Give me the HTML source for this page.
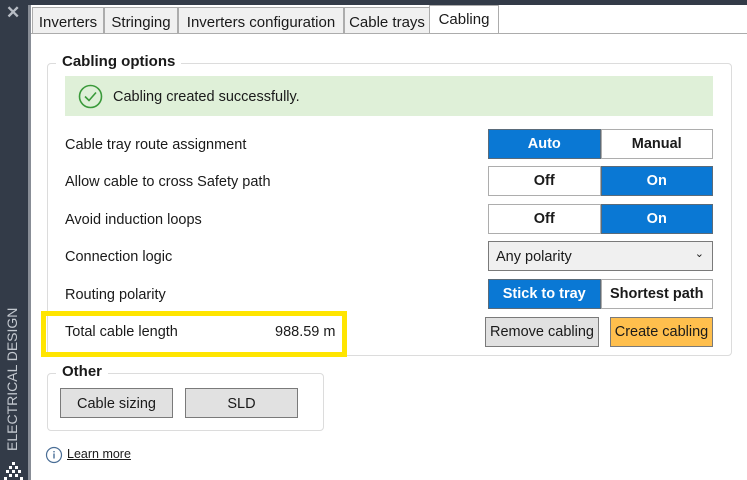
<!DOCTYPE html>
<html><head><style>
*{box-sizing:border-box;margin:0;padding:0}
body{width:747px;height:480px;position:relative;background:#fff;font-family:"Liberation Sans",sans-serif;font-size:14.5px;color:#1a1a1a;overflow:hidden}
.a{position:absolute}
.side{left:0;top:0;width:28px;height:480px;background:#333b48}
.topband{left:28px;top:0;width:719px;height:5px;background:#333b48}
.frame{left:28px;top:5px;width:3px;height:475px;background:#888d96}
.tab{top:7px;height:27px;border:1px solid #acacac;background:#f0f0f0;padding:5px 0 0 0;text-align:center;font-size:15px}
.tabline{left:31px;top:33px;width:716px;height:1px;background:#acacac}
.tsel{background:#fff;border-bottom:none;height:28px;top:5px}
.grp{border:1px solid #dcdcdc;border-radius:4px}
.lbl{left:65px;font-size:14.5px}
.tg{left:488px;width:225px;height:30px;display:flex}
.tg div{flex:1;border:1px solid #adadad;background:#fff;text-align:center;line-height:28px;font-weight:bold;font-size:14.5px}
.tg .on{background:#0a78d4;color:#fff;border-color:#5a6b7a}
.btn{border:1px solid #7a7a7a;background:#e1e1e1;text-align:center;line-height:28px;font-size:14.5px}
</style></head><body>
<div class="a side"></div>
<div class="a" style="left:6px;top:3px;color:#b8bdc5;font-size:17px;font-weight:bold">✕</div>
<div class="a" style="left:4px;top:451px;transform:rotate(-90deg);transform-origin:0 0;color:#c4c9d0;font-size:14px;white-space:nowrap;width:140px">ELECTRICAL DESIGN</div>
<svg class="a" style="left:4px;top:462px" width="20" height="18"><g fill="#fff"><rect x="8" y="0" width="3" height="3"/><rect x="5" y="4" width="3" height="3"/><rect x="11" y="4" width="3" height="3"/><rect x="2" y="8" width="3" height="3"/><rect x="8" y="8" width="3" height="3"/><rect x="14" y="8" width="3" height="3"/><rect x="5" y="12" width="3" height="3"/><rect x="11" y="12" width="3" height="3"/><rect x="0" y="15" width="3" height="3"/><rect x="16" y="15" width="3" height="3"/></g></svg>
<div class="a topband"></div>
<div class="a frame"></div>
<div class="a tabline"></div>
<div class="a tab" style="left:32px;width:72px;padding-top:6px">Inverters</div>
<div class="a tab" style="left:104px;width:74px;padding-top:6px">Stringing</div>
<div class="a tab" style="left:178px;width:166px;padding-top:6px">Inverters configuration</div>
<div class="a tab" style="left:344px;width:86px;padding-top:6px">Cable trays</div>
<div class="a tab tsel" style="left:429px;width:70px">Cabling</div>

<div class="a grp" style="left:47px;top:63px;width:685px;height:293px"></div>
<div class="a" style="left:56px;top:53px;background:#fff;padding:0 6px;font-weight:bold;font-size:15px">Cabling options</div>
<div class="a" style="left:65px;top:76px;width:648px;height:40px;background:#dff0d8"></div>
<svg class="a" style="left:78px;top:84px" width="25" height="25"><circle cx="12.5" cy="12.5" r="11" fill="none" stroke="#3a9a3a" stroke-width="1.6"/><path d="M7 12.5l4 4 7-8" fill="none" stroke="#3a9a3a" stroke-width="1.6"/></svg>
<div class="a" style="left:113px;top:89px">Cabling created successfully.</div>

<div class="a lbl" style="top:137px">Cable tray route assignment</div>
<div class="a tg" style="top:129px"><div class="on">Auto</div><div>Manual</div></div>
<div class="a lbl" style="top:174px">Allow cable to cross Safety path</div>
<div class="a tg" style="top:166px"><div>Off</div><div class="on">On</div></div>
<div class="a lbl" style="top:212px">Avoid induction loops</div>
<div class="a tg" style="top:204px"><div>Off</div><div class="on">On</div></div>
<div class="a lbl" style="top:249px">Connection logic</div>
<div class="a" style="left:488px;top:241px;width:225px;height:30px;border:1px solid #7a7a7a;background:#f0f0f0;padding:7px 0 0 7px">Any polarity<span style="position:absolute;right:8px;top:5px;font-size:11px">⌄</span></div>
<div class="a lbl" style="top:287px">Routing polarity</div>
<div class="a tg" style="top:279px"><div class="on">Stick to tray</div><div>Shortest path</div></div>
<div class="a" style="left:41px;top:311px;width:306px;height:46px;border:5px solid #ffe500"></div>
<div class="a lbl" style="top:324px">Total cable length</div>
<div class="a" style="left:275px;top:324px">988.59 m</div>
<div class="a btn" style="left:485px;top:317px;width:114px;height:30px">Remove cabling</div>
<div class="a btn" style="left:610px;top:317px;width:103px;height:30px;background:#ffbf4d">Create cabling</div>

<div class="a grp" style="left:47px;top:373px;width:277px;height:58px"></div>
<div class="a" style="left:56px;top:363px;background:#fff;padding:0 6px;font-weight:bold;font-size:15px">Other</div>
<div class="a btn" style="left:60px;top:388px;width:113px;height:30px;line-height:30px">Cable sizing</div>
<div class="a btn" style="left:185px;top:388px;width:113px;height:30px;line-height:30px">SLD</div>

<svg class="a" style="left:45px;top:446px" width="18" height="18"><circle cx="9" cy="9" r="7.5" fill="none" stroke="#4a6e96" stroke-width="1.2"/><rect x="8.3" y="7.5" width="1.4" height="5" fill="#4a6e96"/><rect x="8.3" y="5" width="1.4" height="1.4" fill="#4a6e96"/></svg>
<div class="a" style="left:67px;top:447px;font-size:12.5px;text-decoration:underline">Learn more</div>
</body></html>
